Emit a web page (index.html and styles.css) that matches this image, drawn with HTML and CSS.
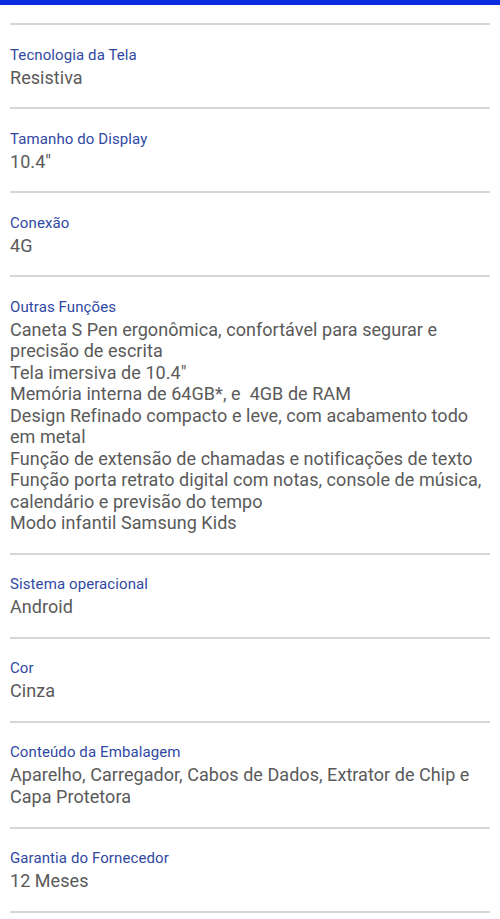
FILE: index.html
```html
<!DOCTYPE html>
<html lang="pt-BR">
<head>
    <meta charset="UTF-8">
    <title>Especificações</title>
    <link rel="stylesheet" href="styles.css">
</head>
<body>
    <div class="topbar"></div>
    <div class="specs">
        <div class="item">
            <div class="label">Tecnologia da Tela</div>
            <div class="value">Resistiva</div>
        </div>
        <div class="item">
            <div class="label">Tamanho do Display</div>
            <div class="value">10.4"</div>
        </div>
        <div class="item">
            <div class="label">Conexão</div>
            <div class="value">4G</div>
        </div>
        <div class="item">
            <div class="label">Outras Funções</div>
            <div class="value">Caneta S Pen ergonômica, confortável para segurar e precisão de escrita<br>Tela imersiva de 10.4"<br>Memória interna de 64GB*, e &nbsp;4GB de RAM<br>Design Refinado compacto e leve, com acabamento todo em metal<br>Função de extensão de chamadas e notificações de texto<br>Função porta retrato digital com notas, console de música, calendário e previsão do tempo<br>Modo infantil Samsung Kids</div>
        </div>
        <div class="item">
            <div class="label">Sistema operacional</div>
            <div class="value">Android</div>
        </div>
        <div class="item">
            <div class="label">Cor</div>
            <div class="value">Cinza</div>
        </div>
        <div class="item">
            <div class="label">Conteúdo da Embalagem</div>
            <div class="value">Aparelho, Carregador, Cabos de Dados, Extrator de Chip e Capa Protetora</div>
        </div>
        <div class="item last">
            <div class="label">Garantia do Fornecedor</div>
            <div class="value">12 Meses</div>
        </div>
    </div>
</body>
</html>
```

FILE: styles.css
```css
*{margin:0;padding:0;}
html,body{width:100%;background:#fff;}
body{font-family:Roboto,"Noto Sans",sans-serif;}
.topbar{height:5px;background:#0a2de2;}
.specs{padding:18px 10px 0;}
.item{border-top:2px solid #d6d6d6;padding:19.5px 0 19.2px;}
.item.last{border-bottom:2px solid #d6d6d6;}
.label{
    font-size:15px;
    line-height:20px;
    color:#3049a3;
    margin-bottom:2px;
    letter-spacing:0.1px;
}
.value{
    font-size:18px;
    line-height:21.45px;
    color:#5a5a5a;
    letter-spacing:0.05px;
}
```
